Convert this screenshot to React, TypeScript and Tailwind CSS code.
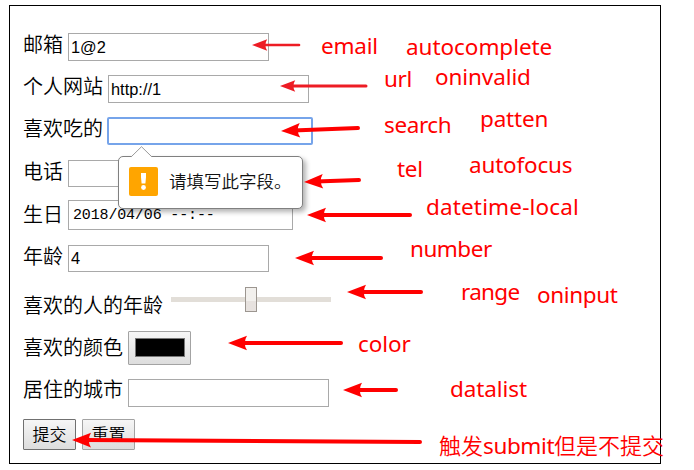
import type { ReactNode } from 'react';

const INPUT =
  'box-border border border-[#a9a9a9] bg-white px-[2px] text-[16.4px] text-black outline-none';
const BUTTON =
  'h-[31px] w-[53px] rounded-[1px] border bg-linear-to-b from-[#f6f6f6] to-[#dddddd] text-[17px] leading-[31px] font-[350] text-[#000]';

type RowProps = { label: string; height: string; children: ReactNode };

function Row({ label, height, children }: RowProps) {
  return (
    <div className={`flex items-start gap-[5px] ${height}`}>
      <label className="text-[20px] leading-[31px] font-[350] whitespace-nowrap">{label}</label>
      {children}
    </div>
  );
}

function Form() {
  return (
    <form className="mt-[5px] ml-[9px] box-border h-[459px] w-[652px] border border-black pt-[24px] pl-[13px]" noValidate>
      <Row label="邮箱" height="h-[42px]">
        <input className={`${INPUT} mt-[3px] h-[28px] w-[201px]`} defaultValue="1@2" />
      </Row>
      <Row label="个人网站" height="h-[42px]">
        <input className={`${INPUT} mt-[3px] h-[28px] w-[201px]`} defaultValue="http://1" />
      </Row>
      <Row label="喜欢吃的" height="h-[43px]">
        <input className="mt-[3px] -ml-px box-border h-[28px] w-[206px] rounded-[2px] border-2 border-[#76a4ea] bg-white outline-none" />
      </Row>
      <Row label="电话" height="h-[43px]">
        <input className={`${INPUT} mt-[3px] h-[27px] w-[201px]`} />
      </Row>
      <Row label="生日" height="h-[42px]">
        <div className="box-border h-[30px] w-[225px] border border-[#a9a9a9] bg-white pl-[4px] font-['Liberation_Mono',monospace] text-[15px] leading-[30px] tracking-[-0.15px] whitespace-pre">
          2018/04/06 --:--
        </div>
      </Row>
      <Row label="年龄" height="h-[49px]">
        <input className={`${INPUT} mt-[3px] h-[27px] w-[201px]`} defaultValue="4" />
      </Row>
      <Row label="喜欢的人的年龄" height="h-[42px]">
        <div className="-mt-[4px] ml-[3px] grid h-[25px] w-[160px] place-items-center">
          <div className="col-start-1 row-start-1 h-[5px] w-full bg-[#e2ded8]" />
          <div className="col-start-1 row-start-1 h-[25px] w-[12px] border border-[#9c9690] bg-linear-to-b from-[#f2f0ed] from-55% to-[#e7e2df] to-55%" />
        </div>
      </Row>
      <Row label="喜欢的颜色" height="h-[42px]">
        <div className="-mt-[2px] flex h-[34px] w-[63px] justify-center rounded-[1px] border border-[#a3a3a3] bg-linear-to-b from-[#f6f6f6] to-[#dddddd] pt-[6px]">
          <div className="h-[19px] w-[50px] border border-[#777777] bg-black" />
        </div>
      </Row>
      <Row label="居住的城市" height="h-[44px]">
        <input className={`${INPUT} mt-[4px] h-[28px] w-[201px]`} />
      </Row>
      <div className="flex gap-[6px]">
        <button type="button" className={`${BUTTON} border-[#707070]`}>提交</button>
        <button type="button" className={`${BUTTON} border-[#a3a3a3]`}>重置</button>
      </div>
    </form>
  );
}

function ValidationBubble() {
  return (
    <div className="absolute top-[156px] left-[118px] flex h-[53px] w-[185px] items-center gap-[11px] rounded-[5px] border border-[#808080] bg-white pl-[10px] shadow-[3px_3px_5px_rgba(0,0,0,0.3)]">
      <svg className="absolute -top-[11px] left-[11px]" width="23" height="12" viewBox="0 0 23 12">
        <path d="M1 11 L11.500 .7 L22 11 V12 H1Z" fill="#fff" />
        <path d="M1 11 L11.500 .7 L22 11" fill="none" stroke="#9a9a9a" />
      </svg>
      <svg className="-mt-[3px] shrink-0" width="29" height="29" viewBox="0 0 29 29">
        <rect width="29" height="29" rx="2" fill="#ffa500" />
        <path d="M12 6h5v4l-.6 6.500h-3.800L12 10z" fill="#fff" />
        <circle cx="14.500" cy="20.500" r="2.400" fill="#fff" />
      </svg>
      <span className="text-[17.5px] font-[350] whitespace-nowrap text-[#111]">请填写此字段。</span>
    </div>
  );
}

type Arrow = { tip: [number, number]; tail: [number, number]; width: number; color: string; head: number };

const ARROWS: Arrow[] = [
  { tip: [252, 45], tail: [299, 45], width: 2.6, color: '#ed1c24', head: 0.8 },
  { tip: [280, 86], tail: [366, 86], width: 3, color: '#ed1c24', head: 0.8 },
  { tip: [281, 131], tail: [358, 128], width: 4, color: '#ff0000', head: 1 },
  { tip: [304, 182], tail: [359, 180], width: 4, color: '#ff0000', head: 1 },
  { tip: [307, 215], tail: [410, 215], width: 4, color: '#ff0000', head: 1 },
  { tip: [295, 258], tail: [381, 258], width: 4, color: '#ff0000', head: 1 },
  { tip: [347, 292], tail: [421, 292], width: 4, color: '#ff0000', head: 1 },
  { tip: [228, 343], tail: [341, 343], width: 4, color: '#ff0000', head: 1 },
  { tip: [343, 390], tail: [396, 390], width: 4, color: '#ff0000', head: 1 },
  { tip: [72, 440], tail: [420, 442], width: 4, color: '#ff0000', head: 1 },
];

function Arrows() {
  return (
    <svg className="pointer-events-none absolute top-0 left-0" width="694" height="470" viewBox="0 0 694 470">
      {ARROWS.map(({ tip, tail, width, color, head }, i) => {
        const dx = tail[0] - tip[0];
        const dy = tail[1] - tip[1];
        const angle = (Math.atan2(dy, dx) * 180) / Math.PI;
        return (
          <g key={i} transform={`translate(${tip[0]} ${tip[1]}) rotate(${angle})`}>
            <line x1={12 * head} y1="0" x2={Math.hypot(dx, dy)} y2="0" stroke={color} strokeWidth={width} strokeLinecap="round" />
            <path d="M0 0 L19 -7.300 Q14.500 0 19 7.300Z" fill={color} transform={`scale(${head})`} />
          </g>
        );
      })}
    </svg>
  );
}

const NOTE = "absolute font-['Noto_Sans','Noto_Sans_CJK_SC',sans-serif] text-[22.5px] leading-[30px] whitespace-nowrap text-[#ff0000]";

function Notes() {
  return (
    <>
      <span className={`${NOTE} top-[31px] left-[321px] tracking-[-0.2px]`}>email</span>
      <span className={`${NOTE} top-[32px] left-[406px] tracking-[-0.05px]`}>autocomplete</span>
      <span className={`${NOTE} top-[64px] left-[384px] tracking-[-0.4px]`}>url</span>
      <span className={`${NOTE} top-[62px] left-[435px] tracking-[-0.1px]`}>oninvalid</span>
      <span className={`${NOTE} top-[110px] left-[384px] tracking-[-0.4px]`}>search</span>
      <span className={`${NOTE} top-[104px] left-[480px] tracking-[-0.2px]`}>patten</span>
      <span className={`${NOTE} top-[154px] left-[397px] tracking-[-0.3px]`}>tel</span>
      <span className={`${NOTE} top-[150px] left-[469px] tracking-[-0.2px]`}>autofocus</span>
      <span className={`${NOTE} top-[192px] left-[426px] tracking-[0.15px]`}>datetime-local</span>
      <span className={`${NOTE} top-[234px] left-[410px] tracking-[-0.5px]`}>number</span>
      <span className={`${NOTE} top-[277px] left-[461px] tracking-[-0.7px]`}>range</span>
      <span className={`${NOTE} top-[280px] left-[537px] tracking-[-0.35px]`}>oninput</span>
      <span className={`${NOTE} top-[329px] left-[358px] tracking-[-0.1px]`}>color</span>
      <span className={`${NOTE} top-[374px] left-[450px] tracking-[-0.1px]`}>datalist</span>
      <span className={`${NOTE} top-[429px] left-[439px]`}>
        <span className="font-['Noto_Sans_CJK_SC',sans-serif] text-[22px] font-[350]">触发</span>
        <span className="tracking-[-0.4px]">submit</span>
        <span className="font-['Noto_Sans_CJK_SC',sans-serif] text-[22px] font-[350]">但是不提交</span>
      </span>
    </>
  );
}

export default function App() {
  return (
    <main className="relative flow-root h-[470px] w-[694px] overflow-hidden bg-white font-['Liberation_Sans','Noto_Sans_CJK_SC',sans-serif] text-black">
      <Form />
      <ValidationBubble />
      <Arrows />
      <Notes />
    </main>
  );
}
